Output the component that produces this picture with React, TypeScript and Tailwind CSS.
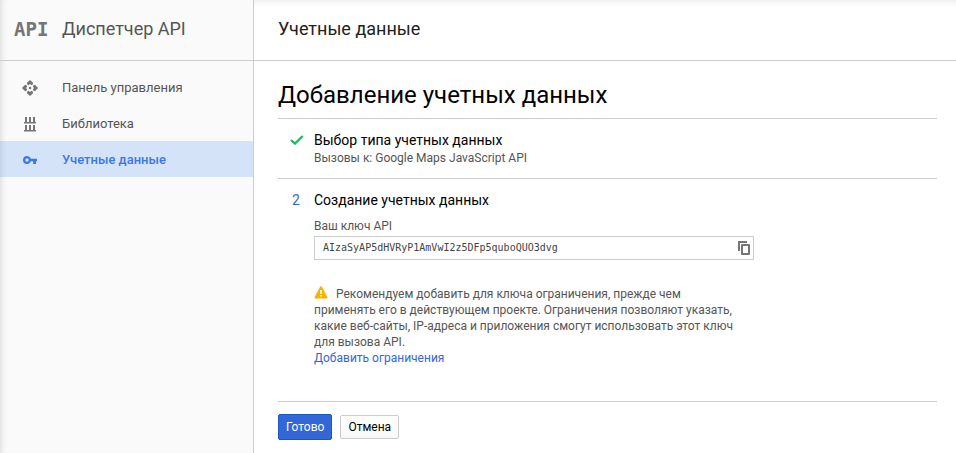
import React from "react";

type IconProps = { className?: string };

function DashboardIcon({ className }: IconProps) {
  return (
    <svg viewBox="0 0 16 16" className={className} fill="currentColor" aria-hidden="true">
      <path d="M8 0l3 2.8v1.4L9.6 5.2 8 4 6.4 5.2 5 4.2V2.8zM8 16l-3-2.8v-1.4l1.4-1L8 12l1.6-1.2 1.4 1v1.4zM0 8l2.8-3h1.4l1 1.4L4 8l1.2 1.6-1 1.4H2.8zM16 8l-2.8 3h-1.4l-1-1.4L12 8l-1.2-1.6 1-1.4h1.4z" />
      <circle cx="8" cy="8" r="1.3" />
    </svg>
  );
}

function LibraryIcon({ className }: IconProps) {
  return (
    <svg viewBox="0 0 12 15" className={className} fill="currentColor" aria-hidden="true">
      <path d="M1 0h2v5H1zM5 0h2v5H5zM9 0h2v5H9zM0 5h12v1.5H0zM1 8h2v5H1zM5 8h2v5H5zM9 8h2v5H9zM0 13h12v1.5H0z" />
    </svg>
  );
}

function KeyIcon({ className }: IconProps) {
  return (
    <svg viewBox="0 0 14 8" className={className} fill="currentColor" aria-hidden="true">
      <path
        fillRule="evenodd"
        d="M4 0a4 4 0 0 1 3.8 2.7H14v2.6h-1V8h-2.8V5.3H7.8A4 4 0 1 1 4 0zm0 2.2a1.8 1.8 0 1 0 0 3.6 1.8 1.8 0 0 0 0-3.6z"
      />
    </svg>
  );
}

function CheckIcon({ className }: IconProps) {
  return (
    <svg viewBox="0 0 14 10" className={className} fill="none" stroke="currentColor" strokeWidth="2.2" aria-hidden="true">
      <path d="M1 5l4 3.6L12.6 1" />
    </svg>
  );
}

function CopyIcon({ className }: IconProps) {
  return (
    <svg viewBox="0 0 12 14" className={className} fill="none" stroke="currentColor" aria-hidden="true">
      <path d="M9 1H1v9" strokeWidth="2" />
      <path d="M4 4h7v9H4z" strokeWidth="2" strokeLinejoin="round" />
    </svg>
  );
}

function WarningIcon({ className }: IconProps) {
  return (
    <svg viewBox="0 0 14 13" className={className} aria-hidden="true">
      <path d="M7 1.2 12.5 11.4h-11z" fill="#f4b400" stroke="#f4b400" strokeWidth="2" strokeLinejoin="round" />
      <path d="M6.2 4h1.6v4H6.2zM6.2 9h1.6v1.6H6.2z" fill="#fff" />
    </svg>
  );
}

const navItems = [
  { label: "Панель управления", icon: <DashboardIcon className="size-4" />, active: false },
  { label: "Библиотека", icon: <LibraryIcon className="h-[15px] w-3" />, active: false },
  { label: "Учетные данные", icon: <KeyIcon className="h-2 w-[14px]" />, active: true },
];

export default function App() {
  return (
    <div className="flex min-h-screen bg-white font-['Roboto','Liberation_Sans',sans-serif] text-[13px] leading-4 text-[#555]">
      <aside className="w-[254px] shrink-0 border-r border-[#ccc] bg-[#fafafa] shadow-[inset_6px_0_6px_-5px_rgba(0,0,0,0.14)]">
        <div className="flex h-[61px] items-center border-b border-[#ccc] pb-[2px] pl-[14px]">
          <span className="w-12 font-['DejaVu_Sans_Mono',monospace] text-[19px] font-bold text-[#757575]" aria-hidden="true">
            API
          </span>
          <span className="text-[18px] leading-6">Диспетчер API</span>
        </div>
        <nav className="pt-2">
          {navItems.map((item) => (
            <a
              key={item.label}
              href="#"
              className={
                item.active
                  ? "flex h-9 items-center bg-[#4285f4]/20 pt-[2px] font-medium text-[#3b78e7]"
                  : "flex h-9 items-center pt-[2px] text-[#555]"
              }
            >
              <span
                className={
                  item.active
                    ? "flex w-[62px] justify-center pr-[2px]"
                    : "flex w-[62px] justify-center pr-[2px] text-[#757575]"
                }
              >
                {item.icon}
              </span>
              {item.label}
            </a>
          ))}
        </nav>
      </aside>

      <div className="min-w-0 flex-1 shadow-[inset_0_6px_6px_-5px_rgba(0,0,0,0.1)]">
        <header className="flex h-[61px] items-center border-b border-[#ccc] pb-[2px] pl-6">
          <h1 className="text-[18px] leading-6 text-[#212121]">Учетные данные</h1>
        </header>

        <main className="pr-[19px] pl-6 text-black">
          <h2 className="pt-[18px] pb-[7px] text-2xl">Добавление учетных данных</h2>

          <section className="flex border-t border-[#ccc] pt-[11px] pb-3">
            <span className="flex h-5 w-9 items-center pl-3">
              <CheckIcon className="h-[10px] w-[14px] text-[#0fc15a]" />
            </span>
            <div>
              <h3 className="text-sm leading-5">Выбор типа учетных данных</h3>
              <p className="text-xs text-[#555]">Вызовы к: Google Maps JavaScript API</p>
            </div>
          </section>

          <section className="flex border-t border-[#ccc] pt-[11px] pb-[35px]">
            <span className="w-9 shrink-0 pl-[14px] text-sm leading-5 text-[#3367d6]">2</span>
            <div className="w-[440px]">
              <h3 className="text-sm leading-5">Создание учетных данных</h3>
              <label htmlFor="api-key" className="mt-2 block text-xs leading-4 text-[#555]">
                Ваш ключ API
              </label>
              <div className="mt-[2px] flex h-6 items-center border border-[#ccc] pr-[3px] pb-px pl-2">
                <input
                  id="api-key"
                  readOnly
                  defaultValue="AIzaSyAP5dHVRyP1AmVwI2z5DFp5quboQUO3dvg"
                  className="min-w-0 flex-1 font-['DejaVu_Sans_Mono',monospace] text-[10px] text-[#444] outline-none"
                />
                <button type="button" aria-label="Копировать" className="text-[#757575]">
                  <CopyIcon className="block h-[14px] w-3" />
                </button>
              </div>
              <p className="mt-[26px] pr-[10px] text-xs leading-4 text-[#555]">
                <WarningIcon className="mr-2 inline h-[13px] w-[14px] align-[-1px]" />
                Рекомендуем добавить для ключа ограничения, прежде чем применять его в действующем проекте. Ограничения
                позволяют указать, какие веб-сайты, IP-адреса и приложения смогут использовать этот ключ для вызова API.
              </p>
              <a href="#" className="block text-xs leading-4 text-[#3367d6]">
                Добавить ограничения
              </a>
            </div>
          </section>

          <div className="flex items-center gap-2 border-t border-[#ccc] pt-3 pb-3 text-xs">
            <button
              type="button"
              className="h-[26px] rounded-xs border border-[#1a56c8] bg-[#3367d6] px-[7px] text-white"
            >
              Готово
            </button>
            <button
              type="button"
              className="h-6 rounded-xs border border-[#ccc] bg-linear-to-b from-white to-[#f8f8f8] px-[7px] text-black"
            >
              Отмена
            </button>
          </div>
        </main>
      </div>
    </div>
  );
}
